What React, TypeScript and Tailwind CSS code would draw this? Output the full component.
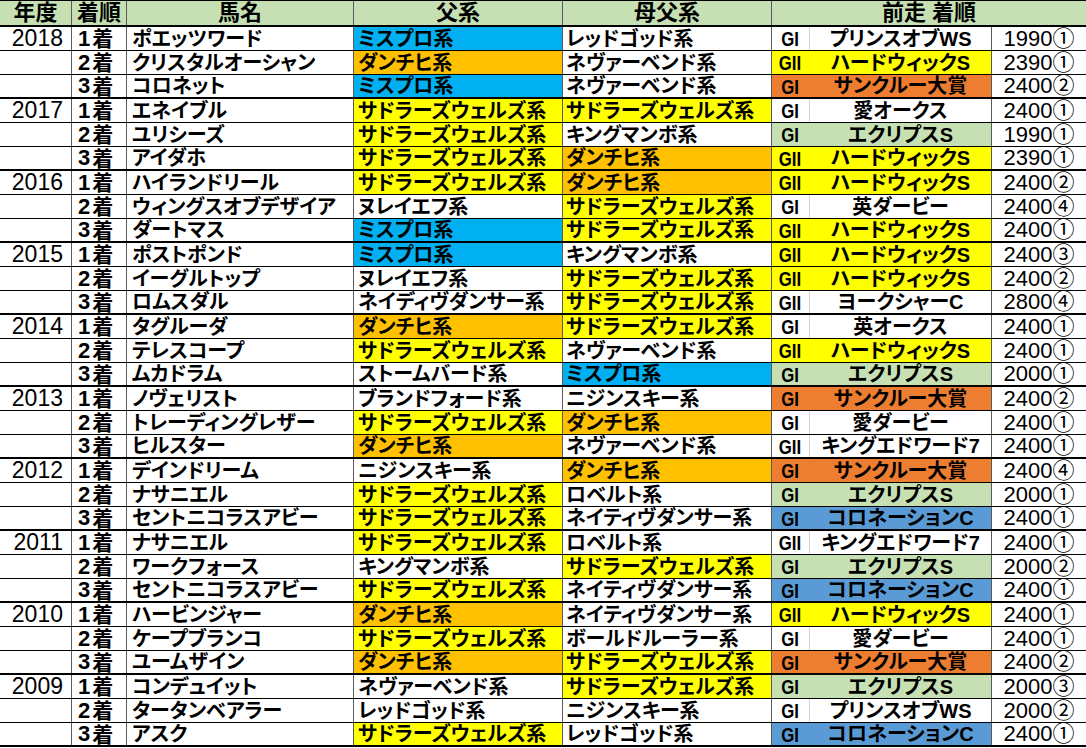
import React from "react";

// rank, name, sire, sireColor, damsire, damsireColor, grade, race, dist (race color derived)
type R = [string, string, string, string, string, string, string, string, string];

const groups: { year: string; rows: R[] }[] = [
  {
    year: "2018",
    rows: [
      ["1", "ポエッツワード", "ミスプロ系", "b", "レッドゴッド系", "w", "GI", "プリンスオブWS", "1990①"],
      ["2", "クリスタルオーシャン", "ダンチヒ系", "o", "ネヴァーベンド系", "w", "GII", "ハードウィックS", "2390①"],
      ["3", "コロネット", "ミスプロ系", "b", "ネヴァーベンド系", "w", "GI", "サンクルー大賞", "2400②"],
    ],
  },
  {
    year: "2017",
    rows: [
      ["1", "エネイブル", "サドラーズウェルズ系", "y", "サドラーズウェルズ系", "y", "GI", "愛オークス", "2400①"],
      ["2", "ユリシーズ", "サドラーズウェルズ系", "y", "キングマンボ系", "w", "GI", "エクリプスS", "1990①"],
      ["3", "アイダホ", "サドラーズウェルズ系", "y", "ダンチヒ系", "o", "GII", "ハードウィックS", "2390①"],
    ],
  },
  {
    year: "2016",
    rows: [
      ["1", "ハイランドリール", "サドラーズウェルズ系", "y", "ダンチヒ系", "o", "GII", "ハードウィックS", "2400②"],
      ["2", "ウィングスオブデザイア", "ヌレイエフ系", "w", "サドラーズウェルズ系", "y", "GI", "英ダービー", "2400④"],
      ["3", "ダートマス", "ミスプロ系", "b", "サドラーズウェルズ系", "y", "GII", "ハードウィックS", "2400①"],
    ],
  },
  {
    year: "2015",
    rows: [
      ["1", "ポストポンド", "ミスプロ系", "b", "キングマンボ系", "w", "GII", "ハードウィックS", "2400③"],
      ["2", "イーグルトップ", "ヌレイエフ系", "w", "サドラーズウェルズ系", "y", "GII", "ハードウィックS", "2400②"],
      ["3", "ロムスダル", "ネイディヴダンサー系", "w", "サドラーズウェルズ系", "y", "GII", "ヨークシャーC", "2800④"],
    ],
  },
  {
    year: "2014",
    rows: [
      ["1", "タグルーダ", "ダンチヒ系", "o", "サドラーズウェルズ系", "y", "GI", "英オークス", "2400①"],
      ["2", "テレスコープ", "サドラーズウェルズ系", "y", "ネヴァーベンド系", "w", "GII", "ハードウィックS", "2400①"],
      ["3", "ムカドラム", "ストームバード系", "w", "ミスプロ系", "b", "GI", "エクリプスS", "2000①"],
    ],
  },
  {
    year: "2013",
    rows: [
      ["1", "ノヴェリスト", "ブランドフォード系", "w", "ニジンスキー系", "w", "GI", "サンクルー大賞", "2400②"],
      ["2", "トレーディングレザー", "サドラーズウェルズ系", "y", "ダンチヒ系", "o", "GI", "愛ダービー", "2400①"],
      ["3", "ヒルスター", "ダンチヒ系", "o", "ネヴァーベンド系", "w", "GII", "キングエドワード7", "2400①"],
    ],
  },
  {
    year: "2012",
    rows: [
      ["1", "デインドリーム", "ニジンスキー系", "w", "ダンチヒ系", "o", "GI", "サンクルー大賞", "2400④"],
      ["2", "ナサニエル", "サドラーズウェルズ系", "y", "ロベルト系", "w", "GI", "エクリプスS", "2000①"],
      ["3", "セントニコラスアビー", "サドラーズウェルズ系", "y", "ネイティヴダンサー系", "w", "GI", "コロネーションC", "2400①"],
    ],
  },
  {
    year: "2011",
    rows: [
      ["1", "ナサニエル", "サドラーズウェルズ系", "y", "ロベルト系", "w", "GII", "キングエドワード7", "2400①"],
      ["2", "ワークフォース", "キングマンボ系", "w", "サドラーズウェルズ系", "y", "GI", "エクリプスS", "2000②"],
      ["3", "セントニコラスアビー", "サドラーズウェルズ系", "y", "ネイティヴダンサー系", "w", "GI", "コロネーションC", "2400①"],
    ],
  },
  {
    year: "2010",
    rows: [
      ["1", "ハービンジャー", "ダンチヒ系", "o", "ネイティヴダンサー系", "w", "GII", "ハードウィックS", "2400①"],
      ["2", "ケープブランコ", "サドラーズウェルズ系", "y", "ボールドルーラー系", "w", "GI", "愛ダービー", "2400①"],
      ["3", "ユームザイン", "ダンチヒ系", "o", "サドラーズウェルズ系", "y", "GI", "サンクルー大賞", "2400②"],
    ],
  },
  {
    year: "2009",
    rows: [
      ["1", "コンデュイット", "ネヴァーベンド系", "w", "サドラーズウェルズ系", "y", "GI", "エクリプスS", "2000③"],
      ["2", "タータンベアラー", "レッドゴッド系", "w", "ニジンスキー系", "w", "GI", "プリンスオブWS", "2000②"],
      ["3", "アスク", "サドラーズウェルズ系", "y", "レッドゴッド系", "w", "GI", "コロネーションC", "2400①"],
    ],
  },
];

const bg: Record<string, string> = {
  b: "bg-[#00b0f0]",
  o: "bg-[#ffc000]",
  y: "bg-[#ffff00]",
  w: "bg-white",
  r: "bg-[#ed7d31]",
  g: "bg-[#c6e0b4]",
  c: "bg-[#5b9bd5]",
};

function raceColor(race: string): string {
  if (race === "サンクルー大賞") return "r";
  if (race === "エクリプスS") return "g";
  if (race === "コロネーションC") return "c";
  if (race === "ハードウィックS") return "y";
  return "w";
}

const JP = "font-['Liberation_Sans','Noto_Sans_CJK_JP',sans-serif] [font-feature-settings:'palt']";
const COLS = "grid grid-cols-[72px_55px_227px_209px_209px_38px_182px_94px]";
const VB = "border-r border-[#5a5a5a]";

export default function App() {
  return (
    <div className={`w-[1086px] h-[748px] bg-white overflow-hidden text-black ${JP}`}>
      <div className={`${COLS} h-[27px] border-t border-b-2 border-black bg-[#c6e0b4] text-[22px] font-bold leading-none`}>
        <div className={`${VB} flex items-center justify-center`}>年度</div>
        <div className={`${VB} flex items-center justify-center`}>着順</div>
        <div className={`${VB} flex items-center justify-center`}>馬名</div>
        <div className={`${VB} flex items-center justify-center`}>父系</div>
        <div className={`${VB} flex items-center justify-center`}>母父系</div>
        <div className="col-span-3 flex items-center justify-center">前走 着順</div>
      </div>
      {groups.map((g) =>
        g.rows.map((r, i) => {
          const last = i === g.rows.length - 1;
          const rc = raceColor(r[7]);
          return (
            <div
              key={g.year + r[0]}
              className={`${COLS} h-[24px] border-black ${last ? "border-b-2" : "border-b"} leading-none`}
            >
              <div className={`${VB} flex items-center justify-end pr-[8px] text-[23px] font-normal`}>
                {i === 0 ? g.year : ""}
              </div>
              <div className={`${VB} flex items-center pl-[6px] text-[21px] font-bold`}>
                <span className="text-[22px] mr-[2px]">{r[0]}</span>
                <span>着</span>
              </div>
              <div className={`${VB} flex items-center pl-[5px] text-[20px] font-bold whitespace-nowrap`}>{r[1]}</div>
              <div className={`${VB} ${bg[r[3]]} flex items-center pl-[4px] text-[20px] font-bold whitespace-nowrap`}>
                {r[2]}
              </div>
              <div className={`${VB} ${bg[r[5]]} flex items-center pl-[3px] text-[20px] font-bold whitespace-nowrap`}>
                {r[4]}
              </div>
              <div
                className={`border-r ${rc === "w" ? "border-[#d4d4d4]" : "border-transparent"} ${bg[rc]} flex items-center justify-center`}
              >
                <span className="inline-block scale-x-[0.8] text-[21px] leading-none font-bold font-['Liberation_Sans',sans-serif]">
                  {r[6]}
                </span>
              </div>
              <div className={`${VB} ${bg[rc]} flex items-center justify-center text-[20px] font-bold whitespace-nowrap`}>
                {r[7]}
              </div>
              <div className="flex items-center justify-center text-[22px] font-normal whitespace-nowrap [font-feature-settings:normal]">
                {r[8]}
              </div>
            </div>
          );
        })
      )}
    </div>
  );
}
